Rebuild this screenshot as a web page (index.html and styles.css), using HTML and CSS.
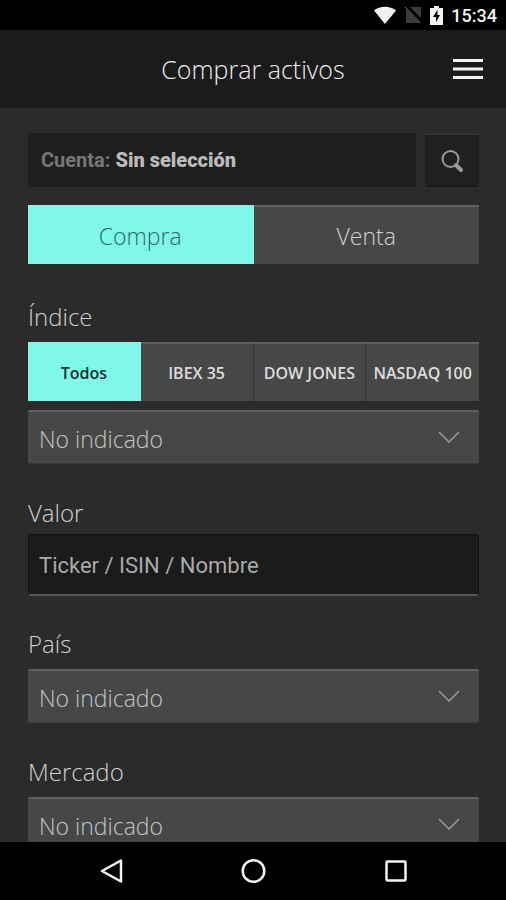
FILE: index.html
```html
<!DOCTYPE html>
<html lang="es">
<head>
<meta charset="UTF-8">
<meta name="viewport" content="width=device-width, initial-scale=1">
<title>Comprar activos</title>
<link rel="stylesheet" href="styles.css">
</head>
<body>

<div class="status-bar">
  <svg width="22" height="18" viewBox="0 0 22 18"><path d="M11 18 0 4.500C6-.5 16-.5 22 4.500z" fill="#f2f2f2"/></svg>
  <svg width="18" height="18" viewBox="0 0 18 18"><path d="M6 1h11v11zM2 3v14h13z" fill="#3c3c3c"/><path d="m1 1 15 16" stroke="#4a4a4a" stroke-width="1.500"/></svg>
  <svg width="13" height="19" viewBox="0 0 13 19"><path d="M4 0h5v2h4v17H0V2h4z" fill="#f2f2f2"/><path d="M7.500 4 3 11h3v5l4-7H7.500z" fill="#000"/></svg>
  <span class="clock">15:34</span>
</div>

<header class="header">
  <h1>Comprar activos</h1>
  <button class="menu" type="button" aria-label="Menú">
    <svg width="32" height="24" viewBox="0 0 32 24"><path d="M1 3.500h30M1 12h30M1 20.500h30" stroke="#f2f2f2" stroke-width="3"/></svg>
  </button>
</header>

<main class="content">
  <form>
    <div class="account">
      <div class="account-name">Cuenta: <strong>Sin selección</strong></div>
      <button class="account-search" type="button" aria-label="Buscar cuenta">
        <svg width="24" height="24" viewBox="0 0 24 24" fill="none" stroke="#9a9a9a"><circle cx="10.500" cy="10" r="8" stroke-width="2"/><path d="m16 16 5 5" stroke-width="4" stroke-linecap="round"/></svg>
      </button>
    </div>

    <div class="tabs operation">
      <button class="tab active" type="button">Compra</button>
      <button class="tab" type="button">Venta</button>
    </div>

    <div class="field">
      <label for="indice">Índice</label>
      <div class="tabs index">
        <button class="tab active" type="button">Todos</button>
        <button class="tab" type="button">IBEX 35</button>
        <button class="tab" type="button">DOW JONES</button>
        <button class="tab" type="button">NASDAQ 100</button>
      </div>
      <div class="select">
        <select id="indice"><option>No indicado</option></select>
        <svg width="22" height="12" viewBox="0 0 22 12"><path d="m1 1 10 10L21 1" fill="none" stroke="#999" stroke-width="1.500"/></svg>
      </div>
    </div>

    <div class="field field-text">
      <label for="valor">Valor</label>
      <input id="valor" type="text" placeholder="Ticker / ISIN / Nombre">
    </div>

    <div class="field">
      <label for="pais">País</label>
      <div class="select">
        <select id="pais"><option>No indicado</option></select>
        <svg width="22" height="12" viewBox="0 0 22 12"><path d="m1 1 10 10L21 1" fill="none" stroke="#999" stroke-width="1.500"/></svg>
      </div>
    </div>

    <div class="field">
      <label for="mercado">Mercado</label>
      <div class="select">
        <select id="mercado"><option>No indicado</option></select>
        <svg width="22" height="12" viewBox="0 0 22 12"><path d="m1 1 10 10L21 1" fill="none" stroke="#999" stroke-width="1.500"/></svg>
      </div>
    </div>
  </form>
</main>

<nav class="nav-bar">
  <button type="button" aria-label="Atrás">
    <svg width="26" height="26" viewBox="0 0 26 26"><path d="M23 2.500v21L4 13z" fill="none" stroke="#f2f2f2" stroke-width="2.500" stroke-linejoin="round"/></svg>
  </button>
  <button type="button" aria-label="Inicio">
    <svg width="26" height="26" viewBox="0 0 26 26"><circle cx="13.500" cy="13" r="10.800" fill="none" stroke="#f2f2f2" stroke-width="2.500"/></svg>
  </button>
  <button type="button" aria-label="Recientes">
    <svg width="26" height="26" viewBox="0 0 26 26"><rect x="4.500" y="3.500" width="19" height="19" rx="1" fill="none" stroke="#f2f2f2" stroke-width="2.500"/></svg>
  </button>
</nav>

</body>
</html>
```
FILE: styles.css
```css
* {
  box-sizing: border-box;
}

body {
  margin: 0;
  height: 100vh;
  display: flex;
  flex-direction: column;
  background-color: #2b2b2b;
  color: #d0d0d0;
  font-family: "Open Sans", "Noto Sans", sans-serif;
  font-weight: 300;
}

button,
input,
select {
  margin: 0;
  padding: 0;
  border: 0;
  background: none;
  color: inherit;
  font: inherit;
}

button {
  cursor: pointer;
}

svg {
  display: block;
}

.status-bar {
  flex: none;
  display: flex;
  align-items: center;
  justify-content: flex-end;
  gap: 8px;
  height: 30px;
  padding: 0 9px;
  background-color: #000;
  color: #f2f2f2;
}

.clock {
  font: 500 18px Roboto, sans-serif;
}

.header {
  flex: none;
  display: grid;
  grid-template-columns: 32px 1fr 32px;
  align-items: center;
  height: 78px;
  padding: 0 22px;
  background-color: #1b1b1b;
}

.header h1 {
  grid-column: 2;
  margin: 0;
  color: #eee;
  font-size: 25px;
  font-weight: 300;
  text-align: center;
}

.content {
  flex: 1;
  min-height: 0;
  overflow: hidden;
  padding: 25px 27px 0 28px;
}

.account {
  display: flex;
  gap: 9px;
  height: 54px;
}

.account-name {
  flex: 1;
  padding: 0 13px;
  background-color: #1e1e1e;
  color: #777;
  font: 700 20px/54px Roboto, sans-serif;
}

.account-name strong {
  color: #bbb;
}

.account-search {
  display: grid;
  place-items: center;
  width: 54px;
  border-top: 2px solid #343434;
  border-bottom: 1px solid #181818;
  border-radius: 2px;
  background-color: #202020;
}

.tabs {
  display: grid;
  grid-auto-flow: column;
  grid-auto-columns: 1fr;
  height: 59px;
}

.tab {
  border-top: 2px solid #606060;
  border-right: 1px solid #383838;
  background-color: #474747;
  white-space: nowrap;
}

.tab:last-child {
  border-right: 0;
}

.tab.active {
  border-color: #80f8e9;
  background-color: #80f8e9;
}

.operation {
  margin: 18px 0 37px;
  font-size: 23px;
}

.operation .active {
  color: #276b68;
}

.index {
  margin-bottom: 9px;
  color: #ddd;
  font-size: 16px;
  font-weight: 600;
}

.index .active {
  color: #10302e;
}

.field {
  margin-bottom: 33px;
}

.field label {
  display: block;
  margin-bottom: 9px;
  font-size: 24px;
  line-height: 32px;
}

.field-text {
  margin-bottom: 32px;
}

.field-text label {
  margin-bottom: 5px;
}

.select {
  display: grid;
  align-items: center;
  color: #c4c4c4;
}

.select select,
.select svg {
  grid-area: 1 / 1;
}

.select select {
  appearance: none;
  width: 100%;
  height: 54px;
  padding: 2px 11px 0;
  border-top: 2px solid #606060;
  border-bottom: 1px solid #393939;
  border-radius: 2px;
  background-color: #474747;
  font-size: 23px;
}

.select svg {
  justify-self: end;
  margin-right: 19px;
  pointer-events: none;
}

.field input {
  display: block;
  width: 100%;
  height: 62px;
  padding: 2px 10px 0;
  border: 1px solid #111;
  border-bottom: 2px solid #555;
  border-radius: 3px;
  background-color: #1b1b1b;
  font: 400 22px Roboto, sans-serif;
}

.field input::placeholder {
  color: #aaa;
  opacity: 1;
}

.nav-bar {
  flex: none;
  display: flex;
  justify-content: space-between;
  height: 58px;
  padding: 0 98px;
  background-color: #000;
}
```
